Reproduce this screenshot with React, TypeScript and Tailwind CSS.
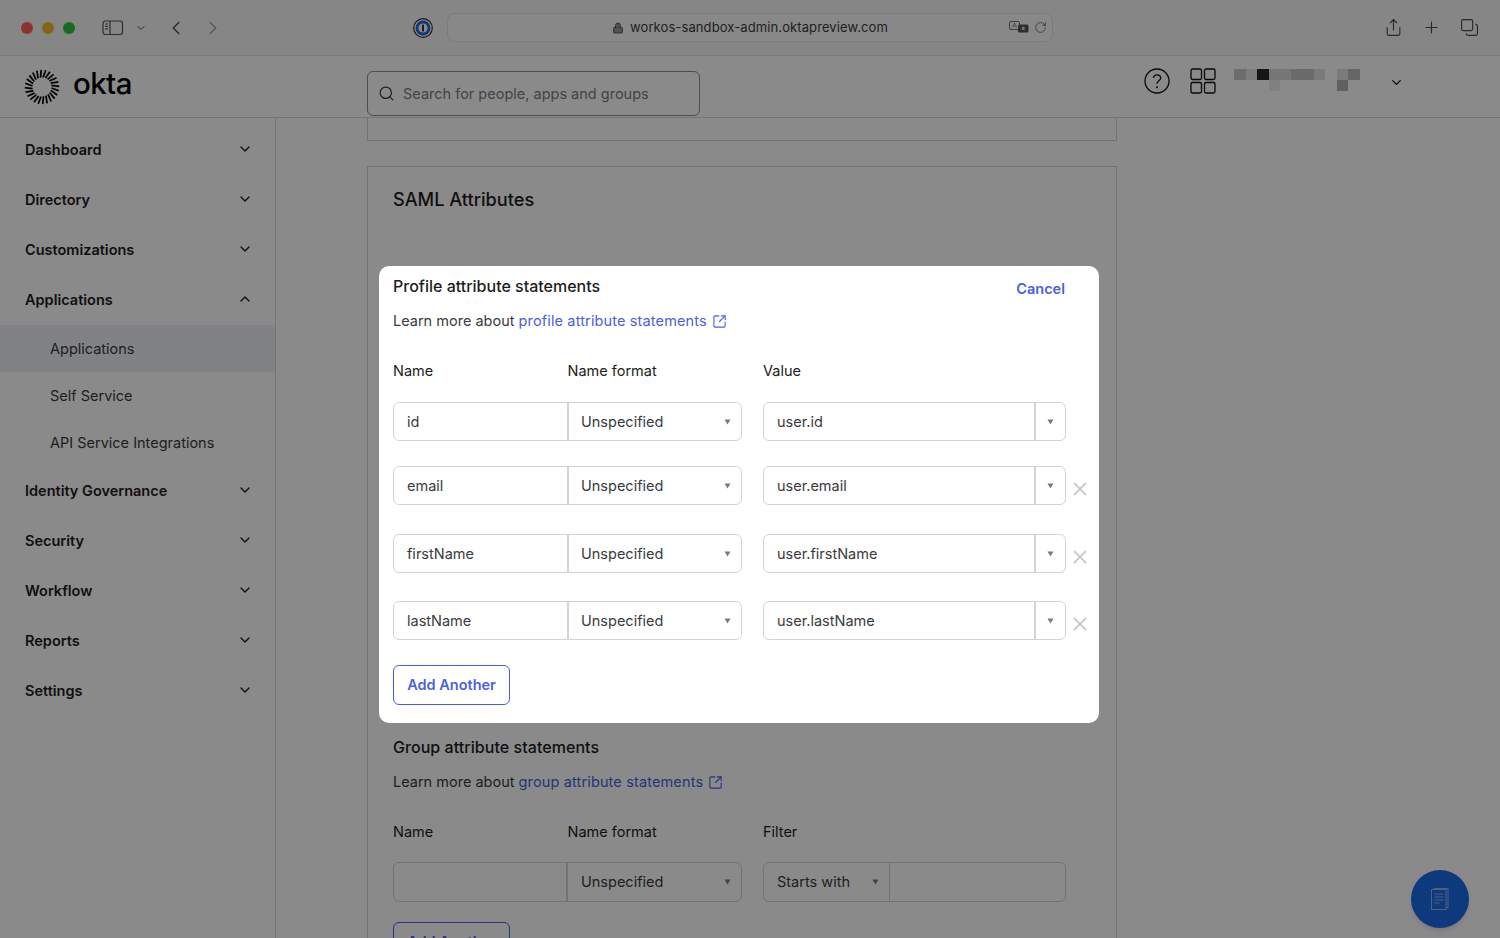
import React from 'react';
import { ChevronDown, ChevronLeft, ChevronRight, ChevronUp, Copy, Lock, Plus, RotateCw, Search, Share, SquareArrowOutUpRight, X } from 'lucide-react';

const navTop = ['Dashboard', 'Directory', 'Customizations'];
const navBottom = ['Identity Governance', 'Security', 'Workflow', 'Reports', 'Settings'];
const subItems = ['Applications', 'Self Service', 'API Service Integrations'];

const profileRows = [
  { name: 'id', value: 'user.id', gap: 'mt-0', removable: false },
  { name: 'email', value: 'user.email', gap: 'mt-[25px]', removable: true },
  { name: 'firstName', value: 'user.firstName', gap: 'mt-[29px]', removable: true },
  { name: 'lastName', value: 'user.lastName', gap: 'mt-[28px]', removable: true },
];

function Caret() {
  return (
    <svg width="7" height="6" viewBox="0 0 7 6" className="shrink-0">
      <path d="M0.5 0.5h6L3.5 5.5z" fill="#7b7b7f" />
    </svg>
  );
}

function OktaMark() {
  const rays = Array.from({ length: 24 }, (_, i) => (i * Math.PI * 2) / 24 + 0.1);
  return (
    <svg width="36" height="36" viewBox="0 0 36 36">
      {rays.map((a, i) => (
        <line
          key={i}
          x1={18 + Math.cos(a) * 9.5}
          y1={18 + Math.sin(a) * 9.5}
          x2={18 + Math.cos(a + 0.12) * 17.2}
          y2={18 + Math.sin(a + 0.12) * 17.2}
          stroke="#000"
          strokeWidth="1.7"
        />
      ))}
    </svg>
  );
}

function NavItem({ label, open }: { label: string; open?: boolean }) {
  return (
    <div className="flex h-[50px] items-center justify-between pl-[25px] pr-[22px] text-[14.5px] font-semibold text-[#1d1d21]">
      <span>{label}</span>
      {open ? <ChevronUp className="h-4 w-4 -translate-y-px" /> : <ChevronDown className="h-4 w-4 -translate-y-px" />}
    </div>
  );
}

function BrowserBar() {
  return (
    <div className="flex h-[56px] items-center border-b border-[#e2e2e2] bg-[#f7f7f7] pl-[21px] pr-[21px] text-[#4a4a4a]">
      <div className="flex gap-[9px]">
        <span className="h-[12px] w-[12px] rounded-full bg-[#ff6058]" />
        <span className="h-[12px] w-[12px] rounded-full bg-[#f5b82e]" />
        <span className="h-[12px] w-[12px] rounded-full bg-[#2dc840]" />
      </div>
      <svg width="22" height="16" viewBox="0 0 22 16" fill="none" stroke="#555" strokeWidth="1.2" className="ml-[27px]">
        <rect x="1" y="1" width="19.5" height="13.5" rx="2.5" />
        <path d="M8 1v13.5M3.2 4h2.6M3.2 6.4h2.6M3.2 8.8h2.6" />
      </svg>
      <ChevronDown className="ml-[11px] h-[12px] w-[12px]" strokeWidth={2} />
      <ChevronLeft className="ml-[18px] h-[22px] w-[22px]" strokeWidth={1.5} />
      <ChevronRight className="ml-[15px] h-[22px] w-[22px] text-[#a3a3a3]" strokeWidth={1.5} />
      <svg width="20" height="20" viewBox="0 0 20 20" className="ml-[189px]">
        <circle cx="10" cy="10" r="9.3" fill="none" stroke="#333" strokeWidth="1.2" />
        <circle cx="10" cy="10" r="7.4" fill="#1a6be8" />
        <circle cx="10" cy="10" r="4.6" fill="#fff" />
        <rect x="9.1" y="6.6" width="1.8" height="6.8" fill="#222" />
      </svg>
      <div className="relative ml-[14px] flex h-[29px] w-[606px] items-center justify-center rounded-[8px] border border-[#e6e6e6] bg-[#fbfbfb] text-[13px] tracking-[0.1px] text-[#3c3c3c]">
        <Lock className="mr-[6px] h-[12px] w-[12px]" strokeWidth={1.5} fill="#999" />
        <span>workos-sandbox-admin.oktapreview.com</span>
        <div className="absolute right-[5px] flex items-center gap-[5px] text-[#666]">
          <svg width="20" height="14" viewBox="0 0 20 14">
            <rect x="0.5" y="0.5" width="10" height="8" rx="1.5" fill="none" stroke="#777" />
            <path d="M3.4 6.6 5.5 2l2.1 4.6M4.2 5h2.6" fill="none" stroke="#777" strokeWidth="0.7" />
            <rect x="9" y="3.5" width="10.5" height="8" rx="1.5" fill="#555" />
            <path d="M14.2 5l.8 1.5 1.6.2-1.2 1.1.3 1.6-1.5-.8-1.4.8.3-1.6-1.2-1.1 1.6-.2z" fill="#ddd" />
          </svg>
          <RotateCw className="h-[13px] w-[13px]" strokeWidth={1.5} />
        </div>
      </div>
      <div className="ml-auto flex items-center gap-[19px]">
        <Share className="h-[19px] w-[19px]" strokeWidth={1.4} />
        <Plus className="h-[19px] w-[19px]" strokeWidth={1.4} />
        <Copy className="h-[19px] w-[19px] -scale-x-100 -scale-y-100" strokeWidth={1.4} />
      </div>
    </div>
  );
}

function OktaHeader() {
  return (
    <header className="flex h-[62px] items-center border-b border-[#d8d8d8] bg-white">
      <div className="ml-[24px] flex w-[343px] items-center">
        <OktaMark />
        <span className="ml-[13px] -translate-y-[3px] text-[29.5px] leading-none font-medium tracking-[-0.6px] text-black">okta</span>
      </div>
      <div className="flex h-[45px] w-[333px] translate-y-[7px] items-center rounded-[6px] border border-[#8c8c96] bg-white pl-[10px] text-[14.5px] text-[#7c7c86]">
        <Search className="h-[17px] w-[17px] text-[#3a3a40]" strokeWidth={1.7} />
        <span className="ml-[8px]">Search for people, apps and groups</span>
      </div>
      <div className="ml-[444px] flex -translate-y-[6px] items-center">
        <svg width="26" height="26" viewBox="0 0 26 26" fill="none" stroke="#111" strokeWidth="1.3">
          <circle cx="13" cy="13" r="12" />
          <path d="M9.4 10c.3-2 1.7-3.2 3.7-3.2 2.1 0 3.6 1.4 3.6 3.2 0 2.6-3.7 2.8-3.7 5.8" />
          <circle cx="13" cy="19.2" r="0.4" fill="#111" />
        </svg>
        <svg width="26" height="26" viewBox="0 0 26 26" fill="none" stroke="#111" strokeWidth="1.3" className="ml-[20px]">
          <rect x="1" y="1" width="10.5" height="10.5" rx="1.5" />
          <rect x="14.5" y="1" width="10.5" height="10.5" rx="1.5" />
          <rect x="1" y="14.5" width="10.5" height="10.5" rx="1.5" />
          <rect x="14.5" y="14.5" width="10.5" height="10.5" rx="1.5" />
        </svg>
        <svg width="126" height="23" viewBox="0 0 126 23" className="ml-[18px]">
          <rect x="0" y="0" width="12" height="11" fill="#c8c8c8" />
          <rect x="12" y="0" width="11" height="11" fill="#e8e8e8" />
          <rect x="23" y="0" width="12" height="11" fill="#2a2a2a" />
          <rect x="35" y="0" width="22" height="11" fill="#dcdcdc" />
          <rect x="57" y="0" width="23" height="11" fill="#c4c4c4" />
          <rect x="80" y="0" width="11" height="11" fill="#e2e2e2" />
          <rect x="35" y="11" width="11" height="11" fill="#ececec" />
          <rect x="103" y="0" width="11" height="11" fill="#e4e4e4" />
          <rect x="114" y="0" width="12" height="11" fill="#bcbcbc" />
          <rect x="103" y="11" width="11" height="11" fill="#b4b4b4" />
        </svg>
        <ChevronDown className="ml-[29px] h-[15px] w-[15px] translate-y-[2px] text-[#111]" strokeWidth={2} />
      </div>
    </header>
  );
}

function Sidebar() {
  return (
    <aside className="w-[276px] shrink-0 border-r border-[#d8d8d8] bg-white pt-[7px]">
      {navTop.map((label) => (
        <NavItem key={label} label={label} />
      ))}
      <NavItem label="Applications" open />
      {subItems.map((label, i) => (
        <div
          key={label}
          className={`flex h-[47px] items-center pl-[50px] text-[14.5px] text-[#3a3a40] ${i === 0 ? 'bg-[#edf0f5]' : ''}`}
        >
          <span className="-translate-y-[0.5px]">{label}</span>
        </div>
      ))}
      {navBottom.map((label) => (
        <NavItem key={label} label={label} />
      ))}
    </aside>
  );
}

function GroupSection() {
  return (
    <div className="mt-[524px]">
      <h3 className="text-[16px] leading-[24px] font-medium tracking-[0.05px] text-[#1d1d21]">Group attribute statements</h3>
      <p className="mt-[11px] text-[14.5px] leading-[24px] text-[#3a3a40]">
        Learn more about <span className="tracking-[0.14px] text-[#4a5fe0]">group attribute statements</span>
        <SquareArrowOutUpRight className="ml-[5px] inline h-[15px] w-[15px] -translate-y-px text-[#4a5fe0]" strokeWidth={1.8} />
      </p>
      <div className="mt-[26px] flex text-[14.5px] leading-[24px] text-[#1d1d21]">
        <span className="w-[174.5px]">Name</span>
        <span className="w-[195.5px]">Name format</span>
        <span>Filter</span>
      </div>
      <div className="mt-[18px] flex text-[14.5px] text-[#3a3a40]">
        <div className="flex h-[39.5px] w-[349px] rounded-[6px] border border-[#d4d4d8] bg-white">
          <div className="w-[174px] border-r-2 border-[#d4d4d8]" />
          <div className="flex flex-1 items-center justify-between pl-[13px] pr-[10px]">
            Unspecified
            <Caret />
          </div>
        </div>
        <div className="ml-[21px] flex h-[39.5px] w-[303px] rounded-[6px] border border-[#d4d4d8] bg-white">
          <div className="flex w-[126px] items-center justify-between border-r border-[#d4d4d8] pl-[13px] pr-[10px]">
            Starts with
            <Caret />
          </div>
        </div>
      </div>
      <div className="mt-[20.5px] flex h-[40px] w-[117px] items-center justify-center rounded-[6px] border border-[#4a5fe0] bg-white text-[14.5px] font-semibold text-[#4a5fe0]">
        Add Another
      </div>
    </div>
  );
}

function AttributesModal() {
  return (
    <div className="absolute top-[266px] left-[379px] h-[457px] w-[720px] rounded-[10px] bg-white pt-[8px] pl-[14px] text-[#1d1d21]">
      <div className="flex items-center justify-between pr-[34px]">
        <h3 className="text-[16px] leading-[24px] font-medium">Profile attribute statements</h3>
        <span className="translate-y-[3px] text-[14.5px] font-semibold text-[#4a5fe0]">Cancel</span>
      </div>
      <p className="mt-[11px] text-[14.5px] leading-[24px] text-[#3a3a40]">
        Learn more about <span className="tracking-[0.14px] text-[#4a5fe0]">profile attribute statements</span>
        <SquareArrowOutUpRight className="ml-[5px] inline h-[15px] w-[15px] -translate-y-px text-[#4a5fe0]" strokeWidth={1.8} />
      </p>
      <div className="mt-[26px] flex text-[14.5px] leading-[24px]">
        <span className="w-[174.5px]">Name</span>
        <span className="w-[195.5px]">Name format</span>
        <span>Value</span>
      </div>
      <div className="mt-[19px] text-[14.5px] text-[#3a3a40]">
        {profileRows.map((row) => (
          <div key={row.name} className={`flex items-center ${row.gap}`}>
            <div className="flex h-[39px] w-[349px] rounded-[6px] border border-[#d4d4d8]">
              <div className="flex w-[175px] items-center border-r-2 border-[#d4d4d8] pl-[13px]">{row.name}</div>
              <div className="flex flex-1 items-center justify-between pl-[12px] pr-[10px]">
                Unspecified
                <Caret />
              </div>
            </div>
            <div className="ml-[21px] flex h-[39px] w-[303px] rounded-[6px] border border-[#d4d4d8]">
              <div className="flex w-[272px] items-center border-r-2 border-[#d4d4d8] pl-[13px]">{row.value}</div>
              <div className="flex flex-1 items-center justify-center">
                <Caret />
              </div>
            </div>
            {row.removable && <X className="ml-[3px] h-[22px] w-[22px] translate-y-[3px] text-[#cbcbcf]" strokeWidth={2} />}
          </div>
        ))}
      </div>
      <div className="mt-[25px] flex h-[39.5px] w-[117px] items-center justify-center rounded-[6px] border border-[#4a5fe0] text-[14.5px] font-semibold text-[#4a5fe0]">
        Add Another
      </div>
    </div>
  );
}

export default function App() {
  return (
    <div className="relative flex h-[938px] w-[1500px] flex-col overflow-hidden bg-white font-['Inter',sans-serif]">
      <BrowserBar />
      <OktaHeader />
      <div className="flex flex-1 overflow-hidden">
        <Sidebar />
        <main className="flex-1 pl-[91px]">
          <div className="h-[23px] w-[750px] border-x border-b border-[#d4d4d8]" />
          <section className="mt-[25px] h-[900px] w-[750px] border border-[#d4d4d8] pt-[20px] pl-[25px]">
            <h2 className="text-[18.2px] leading-[24px] font-medium text-[#1d1d21]">SAML Attributes</h2>
            <GroupSection />
          </section>
        </main>
      </div>

      <div className="absolute right-[31px] bottom-[10px] flex h-[58px] w-[58px] items-center justify-center rounded-full bg-[#1a6be8] shadow-md">
        <svg width="20" height="24" viewBox="0 0 20 24" fill="none" stroke="#8fb4ef" strokeWidth="1">
          <path d="M4 2.5V1.5h14v19h-2" />
          <rect x="1.5" y="2.5" width="14.5" height="20" />
          <path d="M4.5 7h9M4.5 10h9M4.5 13h9M4.5 16h5" />
        </svg>
      </div>

      <div className="absolute inset-0 bg-black/46" />
      <AttributesModal />
    </div>
  );
}
